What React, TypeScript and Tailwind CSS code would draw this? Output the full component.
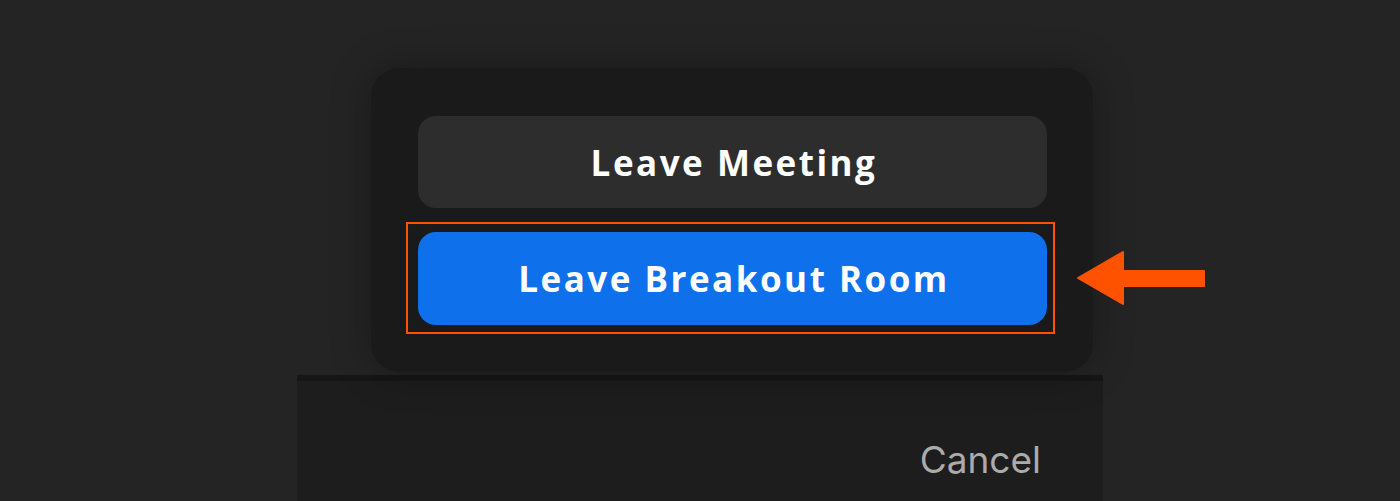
export default function App() {
  return (
    <div
      className="relative h-[501px] w-full overflow-hidden bg-[#242424] flex flex-col items-center pt-[68px]"
      style={{ fontFamily: 'Inter, "Noto Sans", sans-serif' }}
    >
      {/* leave popup */}
      <div className="relative z-10 ml-[64px] w-[722px] h-[304px] rounded-[28px] bg-[#1a1a1a] shadow-[0_0_40px_rgba(0,0,0,0.3)] flex flex-col pt-[48px]">
        <button
          className="ml-[47px] w-[629px] h-[92px] rounded-[18px] bg-[#2d2d2d] text-white text-[35px] font-bold tracking-[2.5px] pl-[3px] pt-[2px]"
          style={{ fontFamily: '"Open Sans", sans-serif' }}
        >
          Leave Meeting
        </button>

        <div className="mt-[14px] ml-[35px] w-[649px] h-[112px] border-2 border-[#ff5200] pl-[10px] pt-[8px]">
          <button
            className="w-[629px] h-[93px] rounded-[18px] bg-[#0e71eb] text-white text-[35px] font-bold tracking-[2.5px] pl-[3px] pt-[2px]"
            style={{ fontFamily: '"Open Sans", sans-serif' }}
          >
            Leave Breakout Room
          </button>
        </div>
      </div>

      {/* panel behind */}
      <div className="mt-[3px] w-[806px] flex-1 bg-[#1d1d1d] flex flex-col">
        <div className="h-[6px] bg-[#161616]" />
        <div className="flex-1 flex items-center justify-end pr-[62px] pt-[36px]">
          <span className="text-[37px] leading-none text-[#ababab]">Cancel</span>
        </div>
      </div>

      {/* annotation arrow */}
      <div className="absolute z-20 left-[1076px] top-[250px] w-[130px] h-[56px]">
        <svg width="130" height="56" viewBox="0 0 130 56">
          <path
            d="M2 28 L47 2 L47 21 L128 21 L128 36 L47 36 L47 54 Z"
            fill="#ff5200"
            stroke="#ff5200"
            strokeWidth="2"
            strokeLinejoin="round"
          />
        </svg>
      </div>
    </div>
  )
}
